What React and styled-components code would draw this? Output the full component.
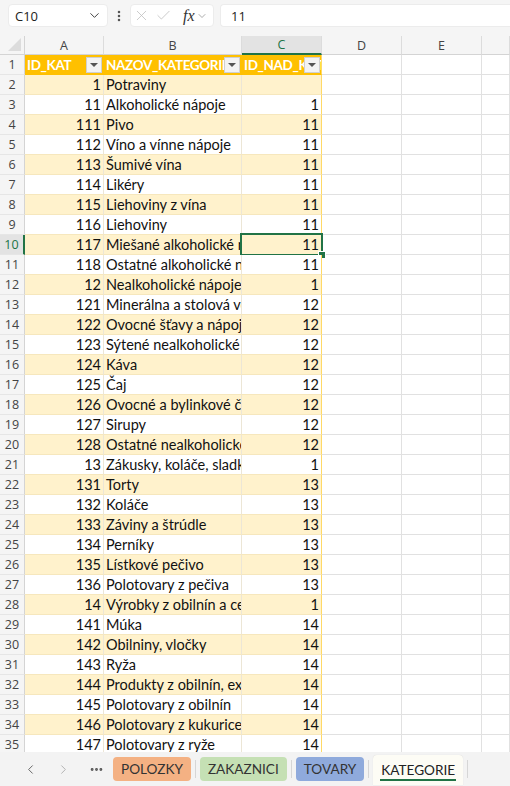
import React from 'react';
import styled, { createGlobalStyle } from 'styled-components';
import { ChevronDown, ChevronLeft, ChevronRight, X, Check, Ellipsis, EllipsisVertical } from 'lucide-react';

const GlobalStyle = createGlobalStyle`
  html, body {
    margin: 0;
    padding: 0;
    background: #ffffff;
    overflow: hidden;
  }
  body {
    font-family: "Open Sans", "Noto Sans", sans-serif;
  }
`;

const COLS = '25px 79px 138px 80px 80px 80px 1fr';

const rows = [
  [1, 'Potraviny', ''],
  [11, 'Alkoholické nápoje', 1],
  [111, 'Pivo', 11],
  [112, 'Víno a vínne nápoje', 11],
  [113, 'Šumivé vína', 11],
  [114, 'Likéry', 11],
  [115, 'Liehoviny z vína', 11],
  [116, 'Liehoviny', 11],
  [117, 'Miešané alkoholické nápoje', 11],
  [118, 'Ostatné alkoholické nápoje', 11],
  [12, 'Nealkoholické nápoje', 1],
  [121, 'Minerálna a stolová voda', 12],
  [122, 'Ovocné šťavy a nápoje', 12],
  [123, 'Sýtené nealkoholické nápoje', 12],
  [124, 'Káva', 12],
  [125, 'Čaj', 12],
  [126, 'Ovocné a bylinkové čaje', 12],
  [127, 'Sirupy', 12],
  [128, 'Ostatné nealkoholické nápoje', 12],
  [13, 'Zákusky, koláče, sladkosti', 1],
  [131, 'Torty', 13],
  [132, 'Koláče', 13],
  [133, 'Záviny a štrúdle', 13],
  [134, 'Perníky', 13],
  [135, 'Lístkové pečivo', 13],
  [136, 'Polotovary z pečiva', 13],
  [14, 'Výrobky z obilnín a cereálií', 1],
  [141, 'Múka', 14],
  [142, 'Obilniny, vločky', 14],
  [143, 'Ryža', 14],
  [144, 'Produkty z obilnín, extrudované', 14],
  [145, 'Polotovary z obilnín', 14],
  [146, 'Polotovary z kukurice', 14],
  [147, 'Polotovary z ryže', 14],
];

const tabs = [
  { name: 'POLOZKY', color: '#f4b183' },
  { name: 'ZAKAZNICI', color: '#c5e0b4' },
  { name: 'TOVARY', color: '#8faadc' },
];

const ACTIVE_ROW = 10;

const App = () => {
  return (
    <Page>
      <GlobalStyle />
      <FormulaBar>
        <NameBox>
          <span>C10</span>
          <ChevronDown size={15} strokeWidth={1.6} color="#444" />
        </NameBox>
        <Dots>
          <EllipsisVertical size={14} strokeWidth={2.4} color="#555" />
        </Dots>
        <FxGroup>
          <X size={17} strokeWidth={1.1} color="#bdbdbd" />
          <Check size={17} strokeWidth={1.1} color="#bdbdbd" />
          <Fx>fx</Fx>
          <ChevronDown size={12} strokeWidth={1.4} color="#888" />
        </FxGroup>
        <FormulaInput>11</FormulaInput>
      </FormulaBar>

      <Sheet>
        <Line $height={19}>
          <Corner><CornerTri /></Corner>
          {['A', 'B', 'C', 'D', 'E', ''].map((c) => (
            <ColHead key={c || 'F'} $active={c === 'C'}>{c}</ColHead>
          ))}
        </Line>

        <Line>
          <RowHead>1</RowHead>
          <HeadCell><HeadText>ID_KAT</HeadText><FilterButton /></HeadCell>
          <HeadCell><HeadText>NAZOV_KATEGORII</HeadText><FilterButton /></HeadCell>
          <HeadCell $edge><HeadText>ID_NAD_KAT</HeadText><FilterButton /></HeadCell>
          <Cell />
          <Cell />
          <Cell />
        </Line>

        {rows.map(([id, name, parent], i) => {
          const n = i + 2;
          const band = n % 2 === 0;
          return (
            <Line key={n}>
              <RowHead $active={n === ACTIVE_ROW}>{n}</RowHead>
              <TableCell $band={band} $right>{id}</TableCell>
              <TableCell $band={band}>{name}</TableCell>
              <TableCell $band={band} $right $edge>
                {parent}
                {n === ACTIVE_ROW && <Selection><Handle /></Selection>}
              </TableCell>
              <Cell />
              <Cell />
              <Cell />
            </Line>
          );
        })}
      </Sheet>

      <TabBar>
        <NavButton><ChevronLeft size={15} strokeWidth={1.4} color="#555" /></NavButton>
        <NavButton><ChevronRight size={15} strokeWidth={1.4} color="#aaa" /></NavButton>
        <NavButton><Ellipsis size={15} strokeWidth={2.6} color="#555" /></NavButton>
        {tabs.map((t) => (
          <React.Fragment key={t.name}>
            <SheetTab $color={t.color}>{t.name}</SheetTab>
            <Divider />
          </React.Fragment>
        ))}
        <ActiveTab>KATEGORIE</ActiveTab>
        <Divider />
      </TabBar>
    </Page>
  );
};

const Page = styled.div`
  width: 510px;
  height: 786px;
  display: flex;
  flex-direction: column;
  background: #ffffff;
  overflow: hidden;
`;

const FormulaBar = styled.div`
  height: 36px;
  flex: none;
  display: flex;
  align-items: flex-start;
  padding: 4px 0 0 8px;
  box-sizing: border-box;
  background: #f5f5f5;
`;

const NameBox = styled.div`
  width: 100px;
  height: 23px;
  box-sizing: border-box;
  background: #fff;
  border-radius: 4px;
  border: 1px solid #ececec;
  display: flex;
  align-items: center;
  justify-content: space-between;
  padding: 0 5px 0 6px;
  font-size: 13px;
  color: #222;
`;

const Dots = styled.div`
  width: 22px;
  height: 23px;
  display: flex;
  align-items: center;
  justify-content: center;
`;

const FxGroup = styled.div`
  width: 84px;
  height: 23px;
  box-sizing: border-box;
  background: #fff;
  border: 1px solid #ececec;
  border-radius: 4px;
  display: flex;
  align-items: center;
  gap: 5px;
  padding: 0 3px 0 2px;
`;

const Fx = styled.span`
  font-family: "Liberation Serif", serif;
  font-style: italic;
  font-size: 16px;
  color: #333;
  margin-left: 6px;
  margin-right: -4px;
`;

const FormulaInput = styled.div`
  flex: 1;
  height: 23px;
  margin-left: 6px;
  box-sizing: border-box;
  background: #fff;
  border: 1px solid #ececec;
  border-right: none;
  border-radius: 4px 0 0 4px;
  display: flex;
  align-items: center;
  padding-left: 10px;
  font-size: 13px;
  color: #222;
`;

const Sheet = styled.div`
  flex: 1;
  overflow: hidden;
  font-family: "Lato", "Carlito", sans-serif;
  font-size: 14.5px;
  color: #111;
`;

const Line = styled.div`
  display: grid;
  grid-template-columns: ${COLS};
  height: ${({ $height }) => $height || 20}px;
`;

const Corner = styled.div`
  position: relative;
  background: #f5f5f5;
  border-right: 1px solid #d4d4d4;
  border-bottom: 1px solid #d4d4d4;
  box-sizing: border-box;
`;

const CornerTri = styled.div`
  position: absolute;
  right: 3px;
  bottom: 3px;
  width: 0;
  height: 0;
  border-left: 13px solid transparent;
  border-bottom: 13px solid #dcdcdc;
`;

const ColHead = styled.div`
  display: flex;
  align-items: center;
  justify-content: center;
  box-sizing: border-box;
  font-family: "Open Sans", sans-serif;
  font-size: 12.5px;
  color: ${({ $active }) => ($active ? '#217346' : '#444')};
  background: ${({ $active }) => ($active ? '#e3e3e3' : '#f5f5f5')};
  border-right: 1px solid #dcdcdc;
  border-bottom: ${({ $active }) => ($active ? '2px solid #217346' : '1px solid #d4d4d4')};
`;

const RowHead = styled.div`
  display: flex;
  align-items: center;
  justify-content: center;
  box-sizing: border-box;
  font-family: "Open Sans", sans-serif;
  font-size: 12.5px;
  color: ${({ $active }) => ($active ? '#217346' : '#444')};
  background: ${({ $active }) => ($active ? '#e3e3e3' : '#f5f5f5')};
  border-right: ${({ $active }) => ($active ? '2px solid #217346' : '1px solid #d4d4d4')};
  border-bottom: 1px solid #e6e6e6;
`;

const Cell = styled.div`
  box-sizing: border-box;
  border-right: 1px solid #e1e1e1;
  border-bottom: 1px solid #e1e1e1;
`;

const HeadCell = styled.div`
  position: relative;
  box-sizing: border-box;
  background: #ffc000;
  display: flex;
  align-items: center;
  padding-left: 2px;
  overflow: hidden;
  white-space: nowrap;
  border-bottom: 1px solid #ffc000;
  border-right: 1px solid ${({ $edge }) => ($edge ? '#ffd966' : '#ffc000')};
`;

const HeadText = styled.span`
  color: #fff;
  font-weight: 700;
  font-size: 13.5px;
  letter-spacing: -0.35px;
`;

const FilterButton = styled.span`
  position: absolute;
  right: 1px;
  top: 2px;
  width: 16px;
  height: 16px;
  box-sizing: border-box;
  background: #f3f3f3;
  border: 1px solid #d0d0d0;
  &::after {
    content: '';
    position: absolute;
    left: 3px;
    top: 5px;
    border-left: 4px solid transparent;
    border-right: 4px solid transparent;
    border-top: 4px solid #555;
  }
`;

const TableCell = styled.div`
  position: relative;
  box-sizing: border-box;
  background: ${({ $band }) => ($band ? '#fff2cc' : '#ffffff')};
  display: flex;
  align-items: center;
  justify-content: ${({ $right }) => ($right ? 'flex-end' : 'flex-start')};
  padding: 0 2px;
  white-space: nowrap;
  overflow: ${({ $edge }) => ($edge ? 'visible' : 'hidden')};
  border-bottom: 1px solid #f6e7bd;
  border-right: 1px solid ${({ $edge }) => ($edge ? '#ffd966' : '#ece6d6')};
`;

const Selection = styled.div`
  position: absolute;
  left: -2px;
  top: -2px;
  right: -2px;
  bottom: -2px;
  border: 2px solid #217346;
  pointer-events: none;
`;

const Handle = styled.div`
  position: absolute;
  right: -5px;
  bottom: -5px;
  width: 6px;
  height: 6px;
  background: #217346;
  border: 1px solid #fff;
`;

const TabBar = styled.div`
  height: 34px;
  flex: none;
  display: flex;
  align-items: center;
  background: #f3f3f3;
  padding-left: 14px;
  font-family: "Lato", "Open Sans", sans-serif;
  font-size: 13.6px;
`;

const NavButton = styled.div`
  width: 32px;
  height: 24px;
  display: flex;
  align-items: center;
  justify-content: center;
  margin-right: 1px;
`;

const SheetTab = styled.div`
  height: 24px;
  display: flex;
  align-items: center;
  padding: 0 8px;
  border-radius: 4px;
  background: ${({ $color }) => $color};
  color: #333;
`;

const Divider = styled.div`
  width: 1px;
  height: 18px;
  background: #d6d6d6;
  margin: 0 4px;
`;

const ActiveTab = styled.div`
  height: 30px;
  margin-top: 2px;
  display: flex;
  align-items: center;
  padding: 0 8px;
  background: #fdfcf5;
  border-radius: 4px 4px 0 0;
  color: #222;
  box-shadow: 0 0 1px rgba(0, 0, 0, 0.15);
  position: relative;
  &::after {
    content: '';
    position: absolute;
    left: 7px;
    right: 7px;
    bottom: 4px;
    height: 2px;
    background: #217346;
  }
`;

export default App;
